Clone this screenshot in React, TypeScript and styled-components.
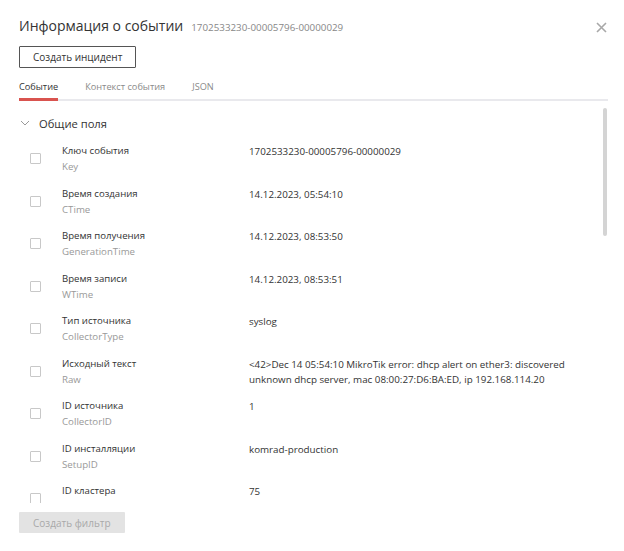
import styled, { createGlobalStyle } from "styled-components";

const GlobalStyle = createGlobalStyle`
  html, body {
    margin: 0;
    padding: 0;
    background: #ffffff;
  }
  body {
    font-family: "Open Sans", "Noto Sans", sans-serif;
    color: #333333;
  }
`;

const Modal = styled.div`
  width: 624px;
  height: 551px;
  box-sizing: border-box;
  padding: 15px 16px 0 19px;
  display: flex;
  flex-direction: column;
  position: relative;
`;

const Header = styled.div`
  display: flex;
  align-items: baseline;
  gap: 8px;
  height: 22px;
`;

const Title = styled.h1`
  margin: 0;
  font-size: 14px;
  font-weight: 400;
  color: #333333;
  line-height: 22px;
`;

const EventId = styled.span`
  font-size: 9.8px;
  color: #888888;
`;

const CloseButton = styled.button`
  position: absolute;
  top: 21px;
  right: 17px;
  width: 12px;
  height: 12px;
  padding: 0;
  border: none;
  background: none;
  display: flex;
  align-items: center;
  justify-content: center;
`;

const OutlineButton = styled.button`
  margin-top: 9px;
  align-self: flex-start;
  height: 22px;
  padding: 0 13px;
  background: #ffffff;
  border: 1px solid #555555;
  border-radius: 1px;
  font-family: inherit;
  font-size: 10px;
  color: #333333;
`;

const Tabs = styled.div`
  margin-top: 7px;
  display: flex;
  gap: 27px;
  border-bottom: 2px solid #e9e9ed;
`;

const Tab = styled.div<{ $active?: boolean }>`
  font-size: 9.2px;
  line-height: 14px;
  padding: 5px 0;
  color: ${(p) => (p.$active ? "#333333" : "#8a8a8a")};
  position: relative;
  &::after {
    content: "";
    display: ${(p) => (p.$active ? "block" : "none")};
    position: absolute;
    left: 0;
    right: 0;
    bottom: -2px;
    height: 3px;
    background: #d9534f;
  }
`;

const ScrollArea = styled.div`
  height: 402px;
  overflow: hidden;
  position: relative;
`;

const ScrollThumb = styled.div`
  position: absolute;
  right: 1px;
  top: 7px;
  width: 4px;
  height: 128px;
  border-radius: 2px;
  background: #d4d4d4;
`;

const SectionHeader = styled.div`
  display: flex;
  align-items: center;
  gap: 9px;
  height: 20px;
  margin-top: 12px;
  padding-left: 1px;
  font-size: 11.2px;
  color: #333333;
`;

const FieldList = styled.div`
  margin-top: 10px;
`;

const FieldRow = styled.div`
  display: grid;
  grid-template-columns: 43px 187px 1fr;
  height: 42.5px;
`;

const CheckCell = styled.div`
  display: flex;
  align-items: flex-start;
  padding-top: 10px;
  padding-left: 11px;
`;

const Checkbox = styled.span`
  width: 9px;
  height: 9px;
  border: 1px solid #c8c8c8;
  border-radius: 1px;
  background: #ffffff;
`;

const LabelCell = styled.div`
  display: flex;
  flex-direction: column;
  line-height: 16px;
`;

const Label = styled.span`
  font-size: 9.6px;
  color: #333333;
`;

const SubLabel = styled.span`
  font-size: 9.7px;
  color: #999999;
`;

const ValueCell = styled.div`
  font-size: 9.8px;
  line-height: 15px;
  padding-top: 1px;
  color: #333333;
  padding-right: 22px;
`;

const FilterButton = styled.button`
  margin-top: 9px;
  align-self: flex-start;
  height: 21px;
  padding: 0 14px;
  border: none;
  border-radius: 1px;
  background: #e3e3e3;
  font-family: inherit;
  font-size: 10px;
  color: #a9a9a9;
`;

const fields = [
  { label: "Ключ события", key: "Key", value: "1702533230-00005796-00000029" },
  { label: "Время создания", key: "CTime", value: "14.12.2023, 05:54:10" },
  { label: "Время получения", key: "GenerationTime", value: "14.12.2023, 08:53:50" },
  { label: "Время записи", key: "WTime", value: "14.12.2023, 08:53:51" },
  { label: "Тип источника", key: "CollectorType", value: "syslog" },
  {
    label: "Исходный текст",
    key: "Raw",
    value:
      "<42>Dec 14 05:54:10 MikroTik error: dhcp alert on ether3: discovered unknown dhcp server, mac 08:00:27:D6:BA:ED, ip 192.168.114.20",
  },
  { label: "ID источника", key: "CollectorID", value: "1" },
  { label: "ID инсталляции", key: "SetupID", value: "komrad-production" },
  { label: "ID кластера", key: "ClusterID", value: "75" },
];

const App = () => {
  return (
    <Modal>
      <GlobalStyle />
      <Header>
        <Title>Информация о событии</Title>
        <EventId>1702533230-00005796-00000029</EventId>
      </Header>
      <CloseButton>
        <svg width="11" height="11" viewBox="0 0 11 11">
          <path d="M1 1 L10 10 M10 1 L1 10" stroke="#a8a8a8" strokeWidth="1.6" />
        </svg>
      </CloseButton>
      <OutlineButton>Создать инцидент</OutlineButton>
      <Tabs>
        <Tab $active>Событие</Tab>
        <Tab>Контекст события</Tab>
        <Tab>JSON</Tab>
      </Tabs>
      <ScrollArea>
        <ScrollThumb />
        <SectionHeader>
          <svg width="10" height="6" viewBox="0 0 10 6">
            <path d="M1 1 L5 5 L9 1" fill="none" stroke="#9a9a9a" strokeWidth="1" />
          </svg>
          Общие поля
        </SectionHeader>
        <FieldList>
          {fields.map((f) => (
            <FieldRow key={f.key}>
              <CheckCell>
                <Checkbox />
              </CheckCell>
              <LabelCell>
                <Label>{f.label}</Label>
                <SubLabel>{f.key}</SubLabel>
              </LabelCell>
              <ValueCell>{f.value}</ValueCell>
            </FieldRow>
          ))}
        </FieldList>
      </ScrollArea>
      <FilterButton>Создать фильтр</FilterButton>
    </Modal>
  );
};

export default App;
